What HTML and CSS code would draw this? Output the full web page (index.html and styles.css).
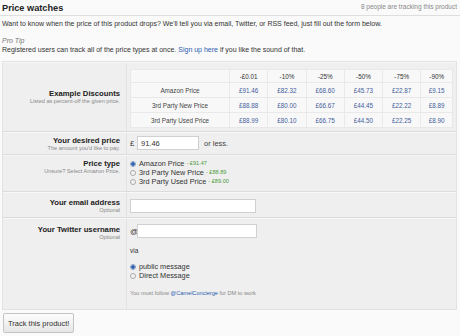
FILE: index.html
```html
<!DOCTYPE html>
<html lang="en">
<head>
    <meta charset="UTF-8">
    <title>Price watches</title>
    <link rel="stylesheet" href="styles.css">
</head>
<body>

<div class="header">
    <h1>Price watches</h1>
    <span class="trackers">8 people are tracking this product</span>
</div>

<p class="intro">Want to know when the price of this product drops? We'll tell you via email, Twitter, or RSS feed, just fill out the form below.</p>
<p class="tip"><em>Pro Tip</em><br>Registered users can track all of the price types at once. <a href="#">Sign up here</a> if you like the sound of that.</p>

<form class="watch-form">
    <div class="row row-discounts">
        <div class="row-label middle">
            <strong>Example Discounts</strong>
            <small>Listed as percent-off the given price.</small>
        </div>
        <div class="row-field">
            <table class="discounts">
                <tr>
                    <th class="first"></th>
                    <th>-£0.01</th><th>-10%</th><th>-25%</th><th>-50%</th><th>-75%</th><th>-90%</th>
                </tr>
                <tr>
                    <td class="first">Amazon Price</td>
                    <td>£91.46</td><td>£82.32</td><td>£68.60</td><td>£45.73</td><td>£22.87</td><td>£9.15</td>
                </tr>
                <tr>
                    <td class="first">3rd Party New Price</td>
                    <td>£88.88</td><td>£80.00</td><td>£66.67</td><td>£44.45</td><td>£22.22</td><td>£8.89</td>
                </tr>
                <tr>
                    <td class="first">3rd Party Used Price</td>
                    <td>£88.99</td><td>£80.10</td><td>£66.75</td><td>£44.50</td><td>£22.25</td><td>£8.90</td>
                </tr>
            </table>
        </div>
    </div>

    <div class="row row-price">
        <div class="row-label">
            <strong>Your desired price</strong>
            <small>The amount you'd like to pay.</small>
        </div>
        <div class="row-field inline">
            <span class="prefix">£</span>
            <input type="text" class="text-input price-input" value="91.46">
            <span class="suffix">or less.</span>
        </div>
    </div>

    <div class="row row-type">
        <div class="row-label">
            <strong>Price type</strong>
            <small>Unsure? Select Amazon Price.</small>
        </div>
        <div class="row-field">
            <label class="choice"><input type="radio" name="type" checked> Amazon Price <span class="current">- £91.47</span></label>
            <label class="choice"><input type="radio" name="type"> 3rd Party New Price <span class="current">- £88.89</span></label>
            <label class="choice"><input type="radio" name="type"> 3rd Party Used Price <span class="current">- £89.00</span></label>
        </div>
    </div>

    <div class="row row-email">
        <div class="row-label">
            <strong>Your email address</strong>
            <small>Optional</small>
        </div>
        <div class="row-field">
            <input type="text" class="text-input email-input">
        </div>
    </div>

    <div class="row row-twitter">
        <div class="row-label">
            <strong>Your Twitter username</strong>
            <small>Optional</small>
        </div>
        <div class="row-field">
            <div class="inline">
                <span class="prefix at">@</span>
                <input type="text" class="text-input twitter-input">
            </div>
            <p class="via">via</p>
            <label class="choice"><input type="radio" name="via" checked> public message</label>
            <label class="choice"><input type="radio" name="via"> Direct Message</label>
            <p class="note">You must follow <a href="#">@CamelConcierge</a> for DM to work</p>
        </div>
    </div>
</form>

<button class="track-button">Track this product!</button>

</body>
</html>
```

FILE: styles.css
```css
body {
    font-family: "Liberation Sans", Arial, sans-serif;
    background-color: #fafafa;
    color: #333;
    margin: 0;
    font-size: 7px;
}
a {
    color: #2a5db0;
    text-decoration: none;
}
.header {
    display: flex;
    justify-content: space-between;
    align-items: flex-start;
    padding: 2px 3px 1px 2px;
    border-bottom: 1px solid #dedede;
}
h1 {
    margin: 0;
    font-size: 9.2px;
    line-height: 12px;
    color: #222;
}
.trackers {
    font-size: 6.5px;
    line-height: 9px;
    color: #888;
}
.intro {
    margin: 3px 2px 0;
    line-height: 10px;
}
.tip {
    margin: 7px 2px 0;
    line-height: 9px;
}
.tip em {
    color: #777;
}
.watch-form {
    margin: 7px 3px 0 2px;
    background-color: #efefef;
    border: 1px solid #e2e2e2;
}
.row {
    display: grid;
    grid-template-columns: 124px 1fr;
    border-top: 1px solid #f7f7f7;
    border-bottom: 1px solid #dcdcdc;
}
.row:last-child {
    border-bottom: none;
}
.row-label {
    text-align: right;
    padding: 3px 6px 0 0;
    border-right: 1px solid #e2e2e2;
}
.row-label.middle {
    display: flex;
    flex-direction: column;
    justify-content: center;
    padding-top: 0;
}
.row-label strong {
    display: block;
    font-size: 7.7px;
    line-height: 9px;
    color: #222;
}
.row-label small {
    display: block;
    font-size: 5.6px;
    line-height: 7px;
    color: #888;
}
.row-field {
    padding: 3px 0 4px 3px;
}
.inline {
    display: flex;
    align-items: center;
}
.prefix {
    font-size: 7.5px;
    width: 7px;
}
.suffix {
    font-size: 7.5px;
    margin-left: 5px;
    color: #444;
}
.text-input {
    font-family: inherit;
    font-size: 7.5px;
    height: 14px;
    box-sizing: border-box;
    padding: 0 3px;
    border: 1px solid #d0d0d0;
    background: #fff;
    color: #333;
    margin: 0;
}
.price-input {
    width: 62px;
}
.email-input {
    width: 126px;
    margin-top: 3px;
}
.twitter-input {
    width: 120px;
}

/* discount table */
.row-discounts .row-field {
    padding: 6px 0 3px 3px;
}
.discounts {
    width: 323px;
    border-collapse: collapse;
    background-color: #f8f8f8;
    border: 1px solid #e6e6e6;
    font-size: 6.3px;
}
.discounts th, .discounts td {
    border: 1px solid #e9e9e9;
    text-align: center;
    padding: 0;
}
.discounts th {
    height: 12px;
    color: #333;
    font-weight: normal;
}
.discounts td {
    height: 14px;
    color: #44609c;
}
.discounts .first {
    width: 98px;
    color: #444;
}

/* radios */
.choice {
    display: flex;
    align-items: center;
    font-size: 7.3px;
    line-height: 9px;
    color: #333;
}
.choice input {
    appearance: none;
    width: 6px;
    height: 6px;
    margin: 0 3px 0 0;
    border: 1px solid #aaa;
    border-radius: 50%;
    background: #f4f4f4;
}
.choice input:checked {
    background: radial-gradient(circle, #2b5fb3 0, #2b5fb3 1.5px, #dbe6f5 2px);
    border-color: #8aa0c0;
}
.current {
    font-size: 5.6px;
    color: #4a9a3a;
    margin-left: 2px;
}
.row-type .row-field {
    padding-bottom: 5px;
}

/* email */
.row-email .row-label {
    padding-top: 5px;
}

/* twitter */
.row-twitter .row-label {
    padding-top: 6px;
}
.row-twitter .row-field {
    padding-top: 5px;
}
.at {
    font-size: 8px;
}
.via {
    margin: 9px 0 7px;
    font-size: 6.5px;
    line-height: 8px;
}
.note {
    margin: 9px 0 8px;
    font-size: 5.6px;
    line-height: 8px;
    color: #888;
}

.track-button {
    margin: 3px 0 0 3px;
    height: 20px;
    padding: 0 4px;
    font-family: inherit;
    font-size: 7.5px;
    color: #333;
    border: 1px solid #c4c4c4;
    border-radius: 2px;
    background: linear-gradient(#fdfdfd, #e6e6e6);
    cursor: pointer;
}
```
